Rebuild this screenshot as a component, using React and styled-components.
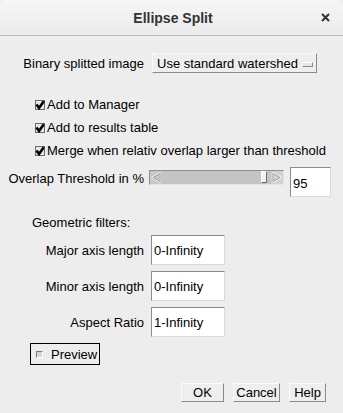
import React from "react";
import styled, { createGlobalStyle } from "styled-components";

const GlobalStyle = createGlobalStyle`
  html, body {
    margin: 0;
    padding: 0;
    background: #ededed;
  }
  body {
    font-family: "Liberation Sans", Arial, sans-serif;
    font-size: 13px;
    color: #000;
  }
`;

const Window = styled.div`
  width: 343px;
  height: 413px;
  background: #ededed;
  display: flex;
  flex-direction: column;
  overflow: hidden;
`;

const TitleBar = styled.div`
  height: 35px;
  flex: none;
  display: grid;
  grid-template-columns: 1fr auto 1fr;
  align-items: center;
  background: linear-gradient(#f6f6f6, #ebebeb);
  border-bottom: 1px solid #bdbdbd;
  border-radius: 6px 6px 0 0;
`;

const Title = styled.div`
  grid-column: 2;
  font-weight: bold;
  font-size: 14px;
  color: #2e3436;
  padding-left: 3px;
`;

const Close = styled.div`
  grid-column: 3;
  justify-self: end;
  margin-right: 13px;
  display: flex;
  align-items: center;
`;

const Body = styled.div`
  flex: 1;
  display: flex;
  flex-direction: column;
  padding-top: 17px;
`;

const FieldRow = styled.div`
  display: grid;
  grid-template-columns: 144px auto;
  column-gap: ${({ gap }) => gap || 7}px;
  align-items: ${({ align }) => align || "center"};
  margin-top: ${({ top }) => top || 0}px;
`;

const Label = styled.div`
  text-align: right;
  white-space: nowrap;
  padding-top: ${({ pad }) => pad || 0}px;
`;

const Choice = styled.div`
  width: 165px;
  height: 20px;
  box-sizing: border-box;
  display: flex;
  align-items: center;
  justify-content: space-between;
  padding: 0 3px 0 4px;
  background: #eeeeee;
  border: 1px solid;
  border-color: #fbfbfb #8a8a8a #8a8a8a #fbfbfb;
  margin-left: 1px;
`;

const ChoiceMark = styled.span`
  width: 9px;
  height: 3px;
  border: 1px solid;
  border-color: #fff #8a8a8a #8a8a8a #fff;
  background: #e4e4e4;
  margin-top: 2px;
`;

const Checks = styled.div`
  display: flex;
  flex-direction: column;
  margin-top: 20px;
  padding-left: 35px;
`;

const CheckRow = styled.label`
  display: flex;
  align-items: center;
  gap: 2px;
  height: 23px;
  white-space: nowrap;
`;

const TextField = styled.div`
  width: ${({ w }) => w || 74}px;
  height: 30px;
  box-sizing: border-box;
  background: #fff;
  border: 1px solid;
  border-color: #8c8c8c #dadada #dadada #8c8c8c;
  display: flex;
  align-items: center;
  padding-left: 2px;
  padding-top: ${({ low }) => (low ? 3 : 0)}px;
`;

const SliderGroup = styled.div`
  display: flex;
  align-items: flex-start;
  gap: 6px;
  margin-left: -1px;
`;

const Slider = styled.div`
  width: 135px;
  height: 15px;
  box-sizing: border-box;
  margin-top: 3px;
  display: flex;
  border: 1px solid;
  border-color: #8e8e8e #e4e4e4 #e4e4e4 #8e8e8e;
  background: #c6c6c6;
`;

const Arrow = styled.div`
  width: 12px;
  flex: none;
  display: flex;
  align-items: center;
  justify-content: center;
  background: ${({ light }) => (light ? "#d2d2d2" : "#c8c8c8")};
`;

const Track = styled.div`
  flex: 1;
  display: flex;
  align-items: stretch;
  padding: 0 0 1px;
  background: #c4c4c4;
`;

const TrackSpace = styled.div`
  flex: none;
`;

const Thumb = styled.div`
  width: 6px;
  flex: none;
  box-sizing: border-box;
  background: #f2f2f2;
  border: 1px solid;
  border-color: #fff #6e6e6e #6e6e6e #fff;
`;

const Section = styled.div`
  margin-top: 17px;
  padding-left: 32px;
  height: 16px;
  display: flex;
  align-items: center;
`;

const PreviewBox = styled.div`
  align-self: flex-start;
  margin: 6px 0 0 30px;
  width: 70px;
  height: 22px;
  box-sizing: border-box;
  border: 1px solid #000;
  display: flex;
  align-items: center;
  gap: 8px;
  padding-left: 5px;
`;

const EmptyBox = styled.span`
  width: 5px;
  height: 5px;
  border: 1px solid;
  border-color: #7a7a7a #fff #fff #7a7a7a;
  background: #d6d6d6;
`;

const Buttons = styled.div`
  display: flex;
  justify-content: flex-end;
  gap: 9px;
  margin-top: 18px;
  padding-right: 17px;
`;

const Button = styled.button`
  font: inherit;
  color: #000;
  height: 19px;
  width: ${({ w }) => w}px;
  box-sizing: border-box;
  padding: 0;
  background: #eeeeee;
  border: 1px solid;
  border-color: #fbfbfb #8a8a8a #8a8a8a #fbfbfb;
  display: flex;
  align-items: center;
  justify-content: center;
`;

const CheckIcon = () => (
  <svg width="10" height="10" viewBox="0 0 10 10">
    <rect x="0.5" y="0.5" width="9" height="9" fill="#e8e8e8" stroke="#6a6a6a" />
    <path d="M1.5 4.5 L4 8 L8.8 1.2" fill="none" stroke="#000" strokeWidth="2.6" />
  </svg>
);

const ArrowIcon = ({ dir }) => (
  <svg width="10" height="11" viewBox="0 0 10 11">
    <polygon
      points={dir === "left" ? "9,0.5 0.5,5.5 9,10.5" : "1,0.5 9.5,5.5 1,10.5"}
      fill="none"
      stroke="#f6f6f6"
    />
    <polygon
      points={dir === "left" ? "9,1.5 2,5.5 9,9.5" : "1,1.5 8,5.5 1,9.5"}
      fill="none"
      stroke="#8a8a8a"
      strokeWidth="0.7"
    />
  </svg>
);

const filters = [
  { label: "Major axis length", value: "0-Infinity" },
  { label: "Minor axis length", value: "0-Infinity" },
  { label: "Aspect Ratio", value: "1-Infinity" },
];

const checks = [
  "Add to Manager",
  "Add to results table",
  "Merge when relativ overlap larger than threshold",
];

export default function App() {
  const threshold = 95;
  const travel = 106; // pixels the thumb can move along the track

  return (
    <Window>
      <GlobalStyle />
      <TitleBar>
        <Title>Ellipse Split</Title>
        <Close>
          <svg width="9" height="9" viewBox="0 0 9 9">
            <path d="M1 1 L8 8 M8 1 L1 8" stroke="#2e3436" strokeWidth="2" />
          </svg>
        </Close>
      </TitleBar>
      <Body>
        <FieldRow gap={7}>
          <Label>Binary splitted image</Label>
          <Choice>
            <span>Use standard watershed</span>
            <ChoiceMark />
          </Choice>
        </FieldRow>

        <Checks>
          {checks.map((c) => (
            <CheckRow key={c}>
              <CheckIcon />
              {c}
            </CheckRow>
          ))}
        </Checks>

        <FieldRow top={5} align="start" gap={6}>
          <Label pad={4}>Overlap Threshold in %</Label>
          <SliderGroup>
            <Slider>
              <Arrow>
                <ArrowIcon dir="left" />
              </Arrow>
              <Track>
                <TrackSpace style={{ width: Math.round((travel * threshold) / 100) - 2 }} />
                <Thumb />
              </Track>
              <Arrow light>
                <ArrowIcon dir="right" />
              </Arrow>
            </Slider>
            <TextField w={41} low>
              {threshold}
            </TextField>
          </SliderGroup>
        </FieldRow>

        <Section>Geometric filters:</Section>

        {filters.map((f, i) => (
          <FieldRow key={f.label} top={i === 0 ? 5 : 6}>
            <Label>{f.label}</Label>
            <TextField>{f.value}</TextField>
          </FieldRow>
        ))}

        <PreviewBox>
          <EmptyBox />
          Preview
        </PreviewBox>

        <Buttons>
          <Button w={43}>OK</Button>
          <Button w={47}>Cancel</Button>
          <Button w={37}>Help</Button>
        </Buttons>
      </Body>
    </Window>
  );
}
